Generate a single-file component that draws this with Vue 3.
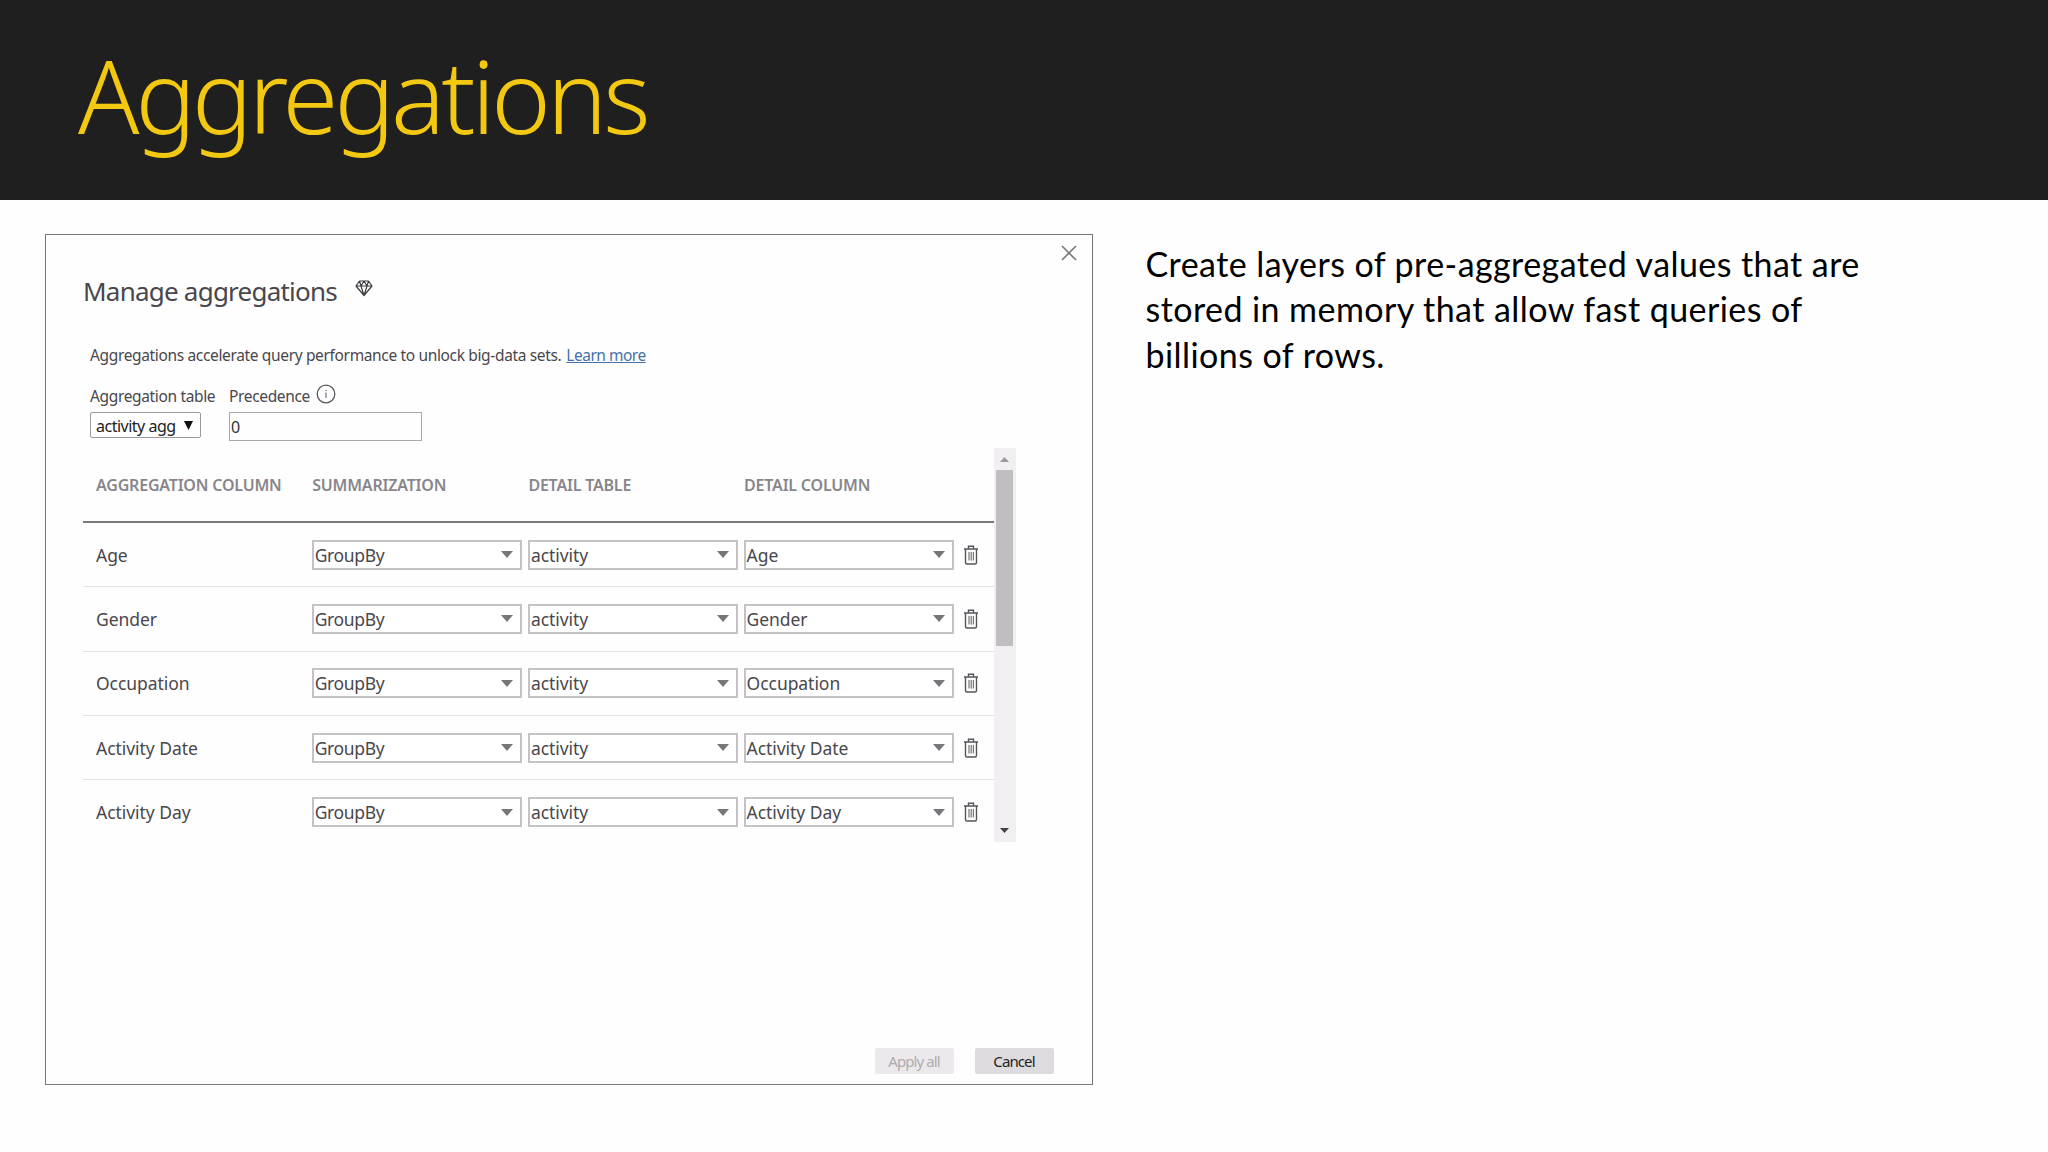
<template>
  <div class="slide">
    <header class="slide-header">
      <h1>Aggregations</h1>
    </header>

    <main class="slide-body">
      <section class="dialog">
        <button class="btn-close" aria-label="Close">
          <svg width="16" height="16" viewBox="0 0 16 16">
            <path d="M1 1L15 15M15 1L1 15" fill="none" stroke="#77757a" stroke-width="1.6" />
          </svg>
        </button>

        <div class="dialog-title">
          <h2>Manage aggregations</h2>
          <svg class="gem" width="18" height="17" viewBox="0 0 18 17">
            <path
              d="M4.5 1H13.5L17 6L9 15.5L1 6ZM1 6H17M4.5 1L6 6L9 15.5L12 6L13.5 1M6 6L9 1L12 6"
              fill="none"
              stroke="#3f3d42"
              stroke-width="1.2"
              stroke-linejoin="round"
            />
          </svg>
        </div>

        <p class="intro">
          <span>Aggregations accelerate query performance to unlock big-data sets.</span>
          <a href="#">Learn more</a>
        </p>

        <div class="fields">
          <div class="field field-table">
            <label>Aggregation table</label>
            <div class="table-select">
              <span>activity agg</span>
              <svg width="9" height="9" viewBox="0 0 9 9"><path d="M0 0H9L4.5 9Z" fill="#111" /></svg>
            </div>
          </div>
          <div class="field field-precedence">
            <label>
              <span>Precedence</span>
              <svg width="20" height="20" viewBox="0 0 20 20">
                <circle cx="10" cy="10" r="8.8" fill="none" stroke="#5b595e" stroke-width="1.3" />
                <path d="M10 8.5V14M10 5.8V7.2" stroke="#77808a" stroke-width="1.3" />
              </svg>
            </label>
            <div class="precedence-input">0</div>
          </div>
        </div>

        <div class="table-area">
          <div class="table">
            <div class="row row-head">
              <span v-for="name in columns" :key="name">{{ name }}</span>
            </div>
            <div v-for="item in rows" :key="item" class="row">
              <span class="name">{{ item }}</span>
              <div v-for="(value, i) in ['GroupBy', 'activity', item]" :key="i" class="dropdown">
                <span>{{ value }}</span>
                <svg width="12" height="7" viewBox="0 0 12 7"><path d="M0 0H12L6 7Z" fill="#777579" /></svg>
              </div>
              <svg class="trash" width="14" height="20" viewBox="0 0 14 20">
                <path
                  d="M0 4H14M4.5 4V1.2H9.5V4M1.5 4V17.5Q1.5 19 3 19H11Q12.5 19 12.5 17.5V4"
                  fill="none"
                  stroke="#57545c"
                  stroke-width="1.4"
                />
                <path d="M5 7V15.5M7.2 7V15.5M9.4 7V15.5" stroke="#77756f" stroke-width="1.2" />
              </svg>
            </div>
          </div>

          <div class="scrollbar">
            <svg width="9" height="5" viewBox="0 0 9 5"><path d="M0 5H9L4.5 0Z" fill="#9b999d" /></svg>
            <div class="thumb"></div>
            <svg class="down" width="9" height="5" viewBox="0 0 9 5"><path d="M0 0H9L4.5 5Z" fill="#444246" /></svg>
          </div>
        </div>

        <footer class="actions">
          <button class="btn" disabled>Apply all</button>
          <button class="btn">Cancel</button>
        </footer>
      </section>

      <p class="note">
        Create layers of pre-aggregated values that are<br />
        stored in memory that allow fast queries of<br />
        billions of rows.
      </p>
    </main>
  </div>
</template>

<script setup>
const columns = ['AGGREGATION COLUMN', 'SUMMARIZATION', 'DETAIL TABLE', 'DETAIL COLUMN']

const rows = ['Age', 'Gender', 'Occupation', 'Activity Date', 'Activity Day']
</script>

<style>
body {
  margin: 0;
  background: #fefefe;
}
</style>

<style scoped>
.slide {
  width: 2048px;
  height: 1152px;
  overflow: hidden;
  background: #fefefe;
  font-family: 'Noto Sans', 'Open Sans', sans-serif;
  color: #49474c;
}

.slide-header {
  box-sizing: border-box;
  height: 200px;
  padding: 26px 0 0 78px;
  background: #1f1f1f;
}

h1 {
  margin: 0;
  font-size: 101px;
  font-weight: 300;
  line-height: 138px;
  letter-spacing: -3.9px;
  color: #f2c811;
}

.slide-body {
  display: flex;
  align-items: flex-start;
  padding: 34px 0 0 45px;
}

.dialog {
  position: relative;
  box-sizing: border-box;
  display: flex;
  flex-direction: column;
  width: 1048px;
  height: 851px;
  padding: 0 38.5px 10px 37px;
  border: 1.5px solid #77757a;
}

.btn-close {
  position: absolute;
  top: 10px;
  right: 15px;
  display: flex;
  padding: 0;
  border: none;
  background: none;
}

.dialog-title {
  display: flex;
  align-items: flex-start;
  gap: 18px;
  padding-top: 38px;
}

h2 {
  width: 254px;
  margin: 0;
  font-size: 26px;
  font-weight: 400;
  line-height: 36px;
  letter-spacing: -0.77px;
  white-space: nowrap;
}

.gem {
  margin-top: 7px;
}

.intro {
  display: flex;
  gap: 5px;
  margin: 35px 0 0 7px;
  font-size: 15.5px;
  line-height: 22px;
  letter-spacing: -0.35px;
  white-space: nowrap;
}

.intro a {
  letter-spacing: -0.5px;
  color: #4472a8;
}

.fields {
  display: flex;
  gap: 14px;
  margin: 19px 0 0 7px;
}

.field label {
  display: flex;
  gap: 6px;
  height: 27px;
  font-size: 15.5px;
  line-height: 23px;
  letter-spacing: -0.35px;
  white-space: nowrap;
}

.field label svg {
  margin-top: -1px;
}

.field-table {
  width: 125px;
}

.table-select {
  box-sizing: border-box;
  display: flex;
  align-items: center;
  justify-content: space-between;
  width: 111px;
  height: 26px;
  padding: 1px 7px 0 5px;
  border: 1px solid #9b999e;
  border-radius: 2px;
  font-size: 16px;
  letter-spacing: -0.5px;
  white-space: nowrap;
  color: #222;
}

.precedence-input {
  box-sizing: border-box;
  width: 193px;
  height: 29px;
  padding-left: 1px;
  border: 1.5px solid #aaa8ad;
  font-size: 16px;
  line-height: 28px;
  color: #333;
}

.table-area {
  display: flex;
  height: 394px;
  margin-top: 7px;
  overflow: hidden;
}

.table {
  width: 910.5px;
}

.row {
  box-sizing: border-box;
  display: grid;
  grid-template-columns: 210px 210px 209.5px 210px 14px;
  column-gap: 6.2px;
  align-items: center;
  height: 64.3px;
  padding-left: 13px;
  border-bottom: 1.5px solid #e6e3e7;
  font-size: 17.5px;
  letter-spacing: -0.05px;
  white-space: nowrap;
}

.row:last-child {
  border-bottom: none;
}

.row-head {
  height: 75px;
  padding-top: 1px;
  border-bottom: 2px solid #7b797e;
  font-size: 16px;
  font-weight: 600;
  letter-spacing: -0.2px;
  color: #88868b;
}

.dropdown {
  box-sizing: border-box;
  display: flex;
  align-items: center;
  justify-content: space-between;
  height: 30px;
  padding: 0 7px 0 0.5px;
  border: 2px solid #c4c2c5;
  background: #fff;
}

.name + .dropdown {
  letter-spacing: -0.35px;
}

.trash {
  margin-left: 4px;
}

.scrollbar {
  box-sizing: border-box;
  display: flex;
  flex-direction: column;
  align-items: center;
  width: 22px;
  padding: 9px 1px 9px 0;
  background: #f1eff2;
}

.thumb {
  width: 17px;
  height: 176px;
  margin-top: 8px;
  background: #c0bec1;
}

.down {
  margin-top: auto;
}

.actions {
  display: flex;
  justify-content: flex-end;
  gap: 21px;
  margin-top: auto;
}

.btn {
  width: 79px;
  height: 26px;
  padding: 0;
  border: none;
  border-radius: 2px;
  background: #dddbde;
  font-family: inherit;
  font-size: 15px;
  letter-spacing: -0.9px;
  color: #222;
}

.btn:disabled {
  background: #ebe9ec;
  color: #aeacb0;
}

.note {
  margin: 7px 0 0 52.5px;
  font-family: Lato, sans-serif;
  font-size: 34px;
  line-height: 45.3px;
  letter-spacing: 0.43px;
  color: #000;
  white-space: nowrap;
}
</style>
